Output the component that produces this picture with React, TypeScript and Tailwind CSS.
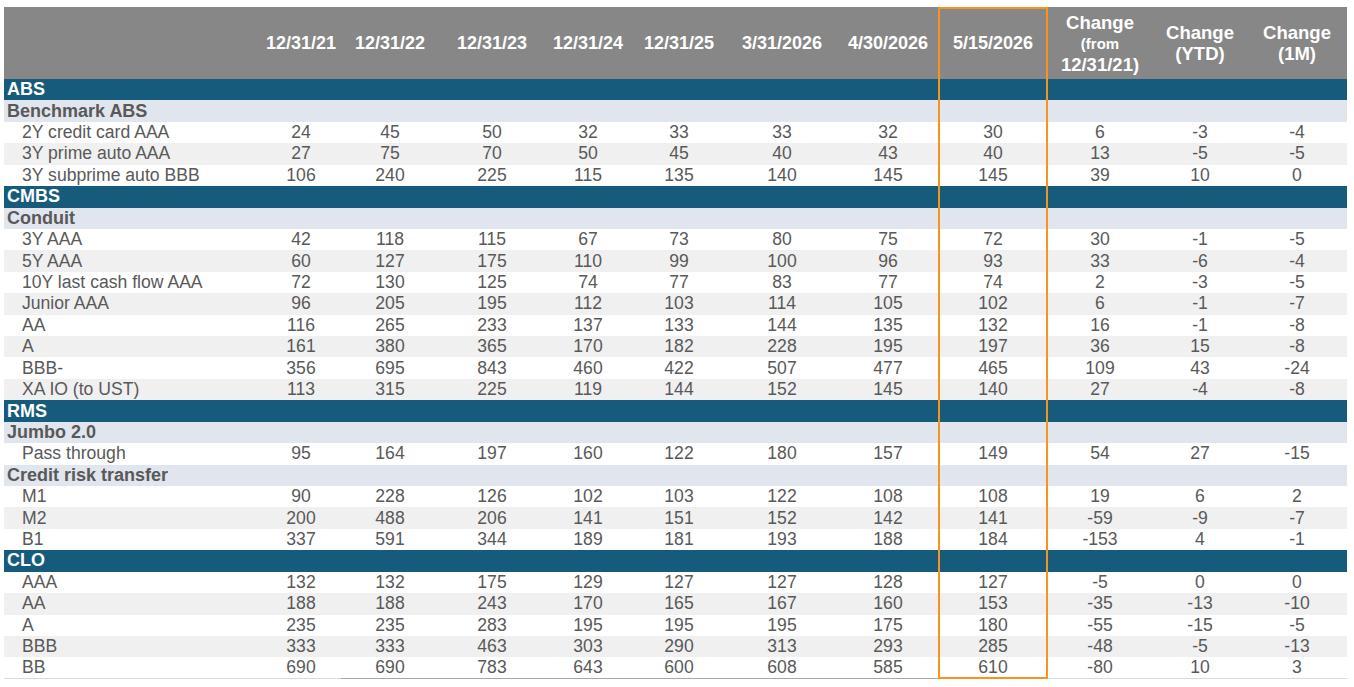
import React from 'react';

type Row =
  | { kind: 'section'; label: string }
  | { kind: 'group'; label: string }
  | { kind: 'data'; label: string; values: number[]; stripe: boolean };

const cols =
  'grid grid-cols-[257px_80px_98px_106px_86px_96px_110px_102px_108px_106px_94px_100px]';

const dates = [
  '12/31/21',
  '12/31/22',
  '12/31/23',
  '12/31/24',
  '12/31/25',
  '3/31/2026',
  '4/30/2026',
  '5/15/2026',
];

const raw: [string, string, number[]?][] = [
  ['section', 'ABS'],
  ['group', 'Benchmark ABS'],
  ['data', '2Y credit card AAA', [24, 45, 50, 32, 33, 33, 32, 30, 6, -3, -4]],
  ['data', '3Y prime auto AAA', [27, 75, 70, 50, 45, 40, 43, 40, 13, -5, -5]],
  ['data', '3Y subprime auto BBB', [106, 240, 225, 115, 135, 140, 145, 145, 39, 10, 0]],
  ['section', 'CMBS'],
  ['group', 'Conduit'],
  ['data', '3Y AAA', [42, 118, 115, 67, 73, 80, 75, 72, 30, -1, -5]],
  ['data', '5Y AAA', [60, 127, 175, 110, 99, 100, 96, 93, 33, -6, -4]],
  ['data', '10Y last cash flow AAA', [72, 130, 125, 74, 77, 83, 77, 74, 2, -3, -5]],
  ['data', 'Junior AAA', [96, 205, 195, 112, 103, 114, 105, 102, 6, -1, -7]],
  ['data', 'AA', [116, 265, 233, 137, 133, 144, 135, 132, 16, -1, -8]],
  ['data', 'A', [161, 380, 365, 170, 182, 228, 195, 197, 36, 15, -8]],
  ['data', 'BBB-', [356, 695, 843, 460, 422, 507, 477, 465, 109, 43, -24]],
  ['data', 'XA IO (to UST)', [113, 315, 225, 119, 144, 152, 145, 140, 27, -4, -8]],
  ['section', 'RMS'],
  ['group', 'Jumbo 2.0'],
  ['data', 'Pass through', [95, 164, 197, 160, 122, 180, 157, 149, 54, 27, -15]],
  ['group', 'Credit risk transfer'],
  ['data', 'M1', [90, 228, 126, 102, 103, 122, 108, 108, 19, 6, 2]],
  ['data', 'M2', [200, 488, 206, 141, 151, 152, 142, 141, -59, -9, -7]],
  ['data', 'B1', [337, 591, 344, 189, 181, 193, 188, 184, -153, 4, -1]],
  ['section', 'CLO'],
  ['data', 'AAA', [132, 132, 175, 129, 127, 127, 128, 127, -5, 0, 0]],
  ['data', 'AA', [188, 188, 243, 170, 165, 167, 160, 153, -35, -13, -10]],
  ['data', 'A', [235, 235, 283, 195, 195, 195, 175, 180, -55, -15, -5]],
  ['data', 'BBB', [333, 333, 463, 303, 290, 313, 293, 285, -48, -5, -13]],
  ['data', 'BB', [690, 690, 783, 643, 600, 608, 585, 610, -80, 10, 3]],
];

function buildRows(): Row[] {
  const rows: Row[] = [];
  let n = 0;
  for (const [kind, label, values] of raw) {
    if (kind === 'data') {
      rows.push({ kind: 'data', label, values: values!, stripe: n % 2 === 1 });
      n++;
    } else {
      rows.push({ kind: kind as 'section' | 'group', label });
      n = 0;
    }
  }
  return rows;
}

const rows = buildRows();

function Header() {
  return (
    <div className={`${cols} h-[72px] bg-[#878787] text-white font-bold text-[18px]`}>
      <div />
      {dates.map((d) => (
        <div key={d} className="flex items-center justify-center pt-[1px]">
          {d}
        </div>
      ))}
      <div className="flex flex-col items-center justify-center leading-[21px]">
        <span className="text-[18.5px]">Change</span>
        <span className="text-[15px]">(from</span>
        <span className="text-[18.5px]">12/31/21)</span>
      </div>
      <div className="flex flex-col items-center justify-center leading-[21px] text-[18.5px]">
        <span>Change</span>
        <span>(YTD)</span>
      </div>
      <div className="flex flex-col items-center justify-center leading-[21px] text-[18.5px]">
        <span>Change</span>
        <span>(1M)</span>
      </div>
    </div>
  );
}

function TableRow({ row, last }: { row: Row; last: boolean }) {
  if (row.kind === 'section') {
    return (
      <div className="h-[21.43px] bg-[#165b7b] text-white font-bold text-[18px] leading-[21px] pl-[3px] flex items-center">
        {row.label}
      </div>
    );
  }
  if (row.kind === 'group') {
    return (
      <div className="h-[21.43px] bg-[#e1e5ee] text-[#595959] font-bold text-[18px] leading-[21px] pl-[3px] flex items-center">
        {row.label}
      </div>
    );
  }
  return (
    <div
      className={`${cols} h-[21.43px] text-[17.6px] leading-[21px] text-[#595959] ${
        row.stripe ? 'bg-[#f0f0f0]' : 'bg-white'
      }`}
    >
      <div
        className={`pl-[18px] flex items-center whitespace-nowrap ${
          last ? 'border-b border-[#d9d9d9]' : ''
        }`}
      >
        {row.label}
      </div>
      {row.values.map((v, i) => (
        <div
          key={i}
          className={`flex items-center justify-center ${
            last
              ? i >= 1 && i <= 6
                ? 'border-b border-[#a6a6a6]'
                : 'border-b border-[#d9d9d9]'
              : ''
          }`}
        >
          {v}
        </div>
      ))}
    </div>
  );
}

export default function App() {
  return (
    <div className="w-[1354px] h-[687px] bg-white overflow-hidden font-['Liberation_Sans',Arial,sans-serif]">
      <div className="relative ml-[4px] mt-[7px] w-[1343px]">
        <Header />
        {rows.map((r, i) => (
          <TableRow key={i} row={r} last={i === rows.length - 1} />
        ))}
        <div className="absolute left-[934px] top-0 w-[110px] h-[672px] border-2 border-[#f7941d] pointer-events-none" />
      </div>
    </div>
  );
}
